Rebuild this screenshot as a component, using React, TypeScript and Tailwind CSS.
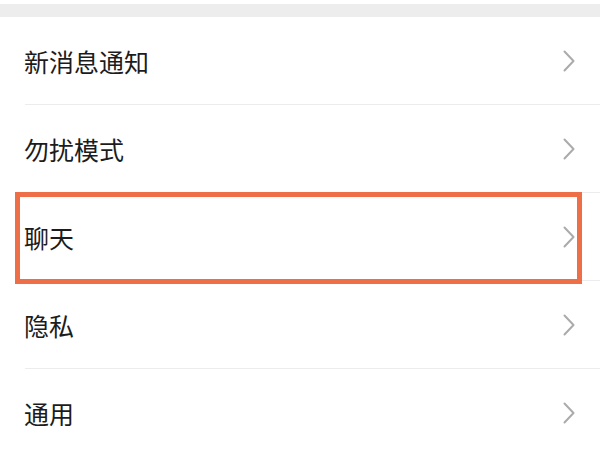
const ITEMS = ["新消息通知", "勿扰模式", "聊天", "隐私", "通用"];

function Chevron() {
  return (
    <svg width="12" height="22" viewBox="0 0 12 22" fill="none" className="shrink-0">
      <polyline points="1.5,1.5 10.5,11 1.5,20.5" stroke="#ababab" strokeWidth="2" strokeLinecap="round" strokeLinejoin="round" />
    </svg>
  );
}

export default function App() {
  return (
    <div
      className="w-[600px] h-[450px] overflow-hidden bg-white"
      style={{ fontFamily: '"Noto Sans CJK SC", "Noto Sans", sans-serif' }}
    >
      <div className="h-[4px] bg-white" />
      <div className="h-[13px] bg-[#ededed]" />
      {ITEMS.map((label, i) => (
        <div key={label} className="relative">
          <div className="flex h-[87px] items-center justify-between pl-[24px] pr-[25px]">
            <span className="text-[25px] leading-none text-[#1c1c1c] pt-[2px]">{label}</span>
            <Chevron />
          </div>
          <div className="ml-[25px] h-px bg-[#ececec]" />
          {i === 2 && (
            <div className="pointer-events-none absolute left-[15px] right-[18px] top-[-1px] bottom-[-3px] border-[5px] border-[#ee6e47]" />
          )}
        </div>
      ))}
    </div>
  );
}
